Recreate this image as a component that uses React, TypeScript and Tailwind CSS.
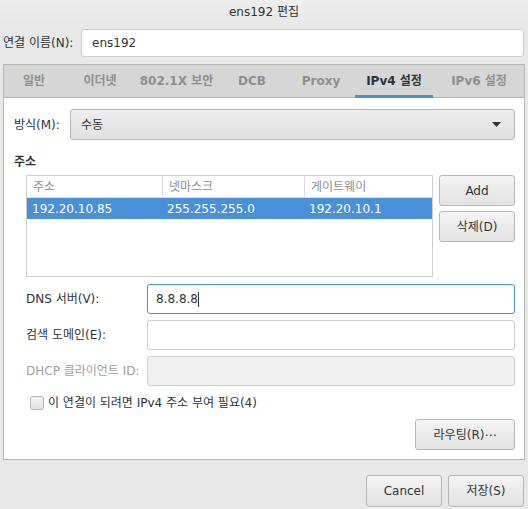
const font = "font-['DejaVu_Sans','Noto_Sans_CJK_KR',sans-serif]";

const tabs = [
  { label: "일반", w: "w-[60px]" },
  { label: "이더넷", w: "w-[72px]" },
  { label: "802.1X 보안", w: "w-[81px]" },
  { label: "DCB", w: "w-[70px]" },
  { label: "Proxy", w: "w-[68px]" },
  { label: "IPv4 설정", w: "w-[78px]", active: true },
  { label: "IPv6 설정", w: "w-[92px]" },
];

const Button = ({ children, className = "" }: { children: React.ReactNode; className?: string }) => (
  <div
    className={`flex items-center justify-center rounded-[3px] border border-[#b6b6b3] bg-gradient-to-b from-[#f4f4f4] to-[#e2e2e2] text-[12px] text-[#2e3436] shadow-[0_1px_0_rgba(255,255,255,0.8)] ${className}`}
  >
    {children}
  </div>
);

const Field = ({ label, value, focused, disabled }: { label: string; value?: string; focused?: boolean; disabled?: boolean }) => (
  <div className="flex items-center h-[30px]">
    <div className={`w-[121px] text-[12px] ${disabled ? "text-[#a0a0a0]" : "text-[#2e3436]"}`}>{label}</div>
    <div
      className={`flex-1 h-full rounded-[3px] border flex items-center px-[8px] text-[12px] text-[#2e3436] ${
        focused ? "border-[#4a90d9] bg-white" : disabled ? "border-[#cdcdcd] bg-[#f0f0f0]" : "border-[#cdcdcd] bg-white"
      }`}
    >
      {value}
      {focused && <span className="w-px h-[15px] bg-[#2e3436]" />}
    </div>
  </div>
);

export default function App() {
  return (
    <div className={`w-[528px] h-[509px] bg-[#e8e8e8] flex flex-col overflow-hidden ${font}`}>
      {/* title bar */}
      <div className="h-[24px] flex items-center justify-center text-[12px] text-[#2e3436] bg-gradient-to-b from-[#eeeeee] to-[#e8e8e8]">
        ens192 편집
      </div>

      {/* connection name */}
      <div className="flex items-center mt-[5px] pl-[3px] pr-[4px] h-[28px]">
        <div className="w-[78px] text-[12px] text-[#2e3436]">연결 이름(N):</div>
        <div className="flex-1 h-full rounded-[3px] border border-[#cdcdcd] bg-white flex items-center px-[10px] text-[12px] text-[#2e3436]">
          ens192
        </div>
      </div>

      {/* notebook */}
      <div className="mt-[7px] mx-[3px] w-[522px] flex flex-col border border-[#b6b6b3]">
        <div className="flex h-[33px] bg-[#d6d6d6] border-b border-[#b6b6b3]">
          {tabs.map((t) => (
            <div
              key={t.label}
              className={`${t.w} shrink-0 flex items-center justify-center text-[12px] font-bold relative ${
                t.active ? "text-[#2e3436]" : "text-[#8f8f8f]"
              }`}
            >
              {t.label}
              {t.active && <div className="absolute left-0 right-0 bottom-[-1px] h-[3px] bg-[#4a90d9]" />}
            </div>
          ))}
        </div>

        <div className="h-[361px] bg-white flex flex-col pl-[10px] pr-[9px] pt-[11px]">
          {/* method */}
          <div className="flex items-center h-[31px]">
            <div className="w-[56px] text-[12px] text-[#2e3436]">방식(M):</div>
            <div className="flex-1 h-full rounded-[3px] border border-[#b6b6b3] bg-gradient-to-b from-[#eeeeee] to-[#e0e0e0] flex items-center justify-between pl-[10px] pr-[13px] text-[12px] text-[#2e3436]">
              <span>수동</span>
              <svg width="9" height="5" viewBox="0 0 9 5">
                <path d="M0 0h9L4.5 5z" fill="#2e3436" />
              </svg>
            </div>
          </div>

          <div className="mt-[13px] text-[12px] font-bold text-[#2e3436]">주소</div>

          {/* address table + buttons */}
          <div className="flex mt-[4px] pl-[12px] gap-[6px]">
            <div className="w-[407px] h-[102px] border border-[#cdcdcd] bg-white flex flex-col text-[12px]">
              <div className="flex h-[22px] border-b border-[#dcdcdc] text-[#8f8f8f]">
                <div className="w-[135px] px-[6px] flex items-center">주소</div>
                <div className="w-[142px] px-[6px] flex items-center border-l border-[#dcdcdc]">넷마스크</div>
                <div className="flex-1 px-[6px] flex items-center border-l border-[#dcdcdc]">게이트웨이</div>
              </div>
              <div className="flex h-[21px] bg-[#4a90d9] text-white">
                <div className="w-[135px] px-[5px] flex items-center">192.20.10.85</div>
                <div className="w-[142px] px-[5px] flex items-center">255.255.255.0</div>
                <div className="flex-1 px-[5px] flex items-center">192.20.10.1</div>
              </div>
            </div>
            <div className="flex flex-col gap-[5px]">
              <Button className="w-[76px] h-[31px]">Add</Button>
              <Button className="w-[76px] h-[31px]">삭제(D)</Button>
            </div>
          </div>

          {/* fields */}
          <div className="flex flex-col gap-[6px] mt-[7px] pl-[12px]">
            <Field label="DNS 서버(V):" value="8.8.8.8" focused />
            <Field label="검색 도메인(E):" />
            <Field label="DHCP 클라이언트 ID:" disabled />
          </div>

          <div className="flex items-center mt-[8px] pl-[16px] gap-[4px] text-[12px] text-[#2e3436]">
            <div className="w-[14px] h-[14px] rounded-[3px] border border-[#b6b6b3] bg-gradient-to-b from-[#f4f4f4] to-[#e2e2e2]" />
            <span>이 연결이 되려면 IPv4 주소 부여 필요(4)</span>
          </div>

          <div className="flex justify-end mt-[7px]">
            <Button className="w-[100px] h-[31px]">라우팅(R)⋯</Button>
          </div>
        </div>
      </div>

      {/* dialog buttons */}
      <div className="flex justify-end gap-[6px] mt-[15px] pr-[4px]">
        <Button className="w-[76px] h-[32px]">Cancel</Button>
        <Button className="w-[76px] h-[32px]">저장(S)</Button>
      </div>
    </div>
  );
}
